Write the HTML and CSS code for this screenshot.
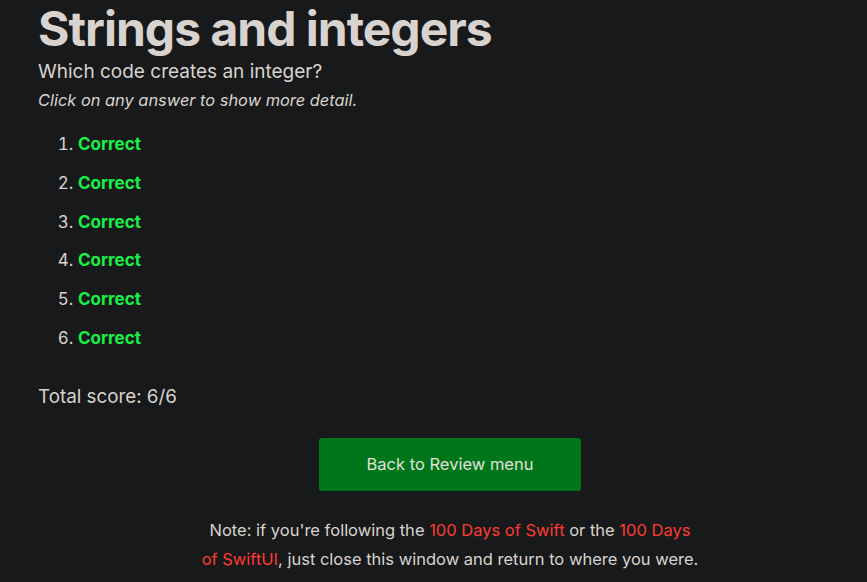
FILE: index.html
```html
<!DOCTYPE html>
<html lang="en">
<head>
<meta charset="utf-8">
<title>Strings and integers</title>
<link rel="stylesheet" href="styles.css">
</head>
<body>
<main class="page">
  <h1 class="title">Strings and integers</h1>
  <p class="question">Which code creates an integer?</p>
  <p class="hint">Click on any answer to show more detail.</p>
  <ol class="answers">
    <li><span class="correct">Correct</span></li>
    <li><span class="correct">Correct</span></li>
    <li><span class="correct">Correct</span></li>
    <li><span class="correct">Correct</span></li>
    <li><span class="correct">Correct</span></li>
    <li><span class="correct">Correct</span></li>
  </ol>
  <p class="score">Total score: 6/6</p>
  <div class="actions">
    <a class="button" href="#">Back to Review menu</a>
  </div>
  <p class="note">Note: if you're following the <a href="#">100 Days of Swift</a> or the <a href="#">100 Days of SwiftUI</a>, just close this window and return to where you were.</p>
</main>
</body>
</html>
```

FILE: styles.css
```css
html, body {
  margin: 0;
  background: #18191b;
}
body {
  font-family: Inter, "Noto Sans", sans-serif;
  color: #d8d3ce;
}
.page {
  padding: 0 5px 0 38px;
}
.title {
  margin: 0;
  font-size: 48px;
  line-height: 58px;
  font-weight: 700;
  letter-spacing: -1px;
}
.question {
  margin: 2px 0 0;
  font-size: 19px;
  line-height: 24px;
}
.hint {
  margin: 4px 0 0;
  font-size: 16.4px;
  line-height: 24px;
  font-style: italic;
}
.answers {
  margin: 20px 0 0;
  padding-left: 40px;
  font-size: 17px;
  line-height: 25px;
}
.answers li {
  margin-bottom: 13.8px;
}
.correct {
  color: #1aef45;
  font-weight: 700;
}
.score {
  margin: 33px 0 0;
  font-size: 18.8px;
  line-height: 26px;
}
.actions {
  display: flex;
  justify-content: center;
  margin-top: 28px;
}
.button {
  display: block;
  width: 262px;
  height: 53px;
  line-height: 53px;
  text-align: center;
  background: #00761a;
  color: #e3e0dc;
  border-radius: 3px;
  text-decoration: none;
  font-size: 16.5px;
}
.note {
  max-width: 500px;
  margin: 25px auto 0;
  text-align: center;
  font-size: 16.5px;
  line-height: 29px;
}
.note a {
  color: #ff3b30;
  text-decoration: none;
}
```
